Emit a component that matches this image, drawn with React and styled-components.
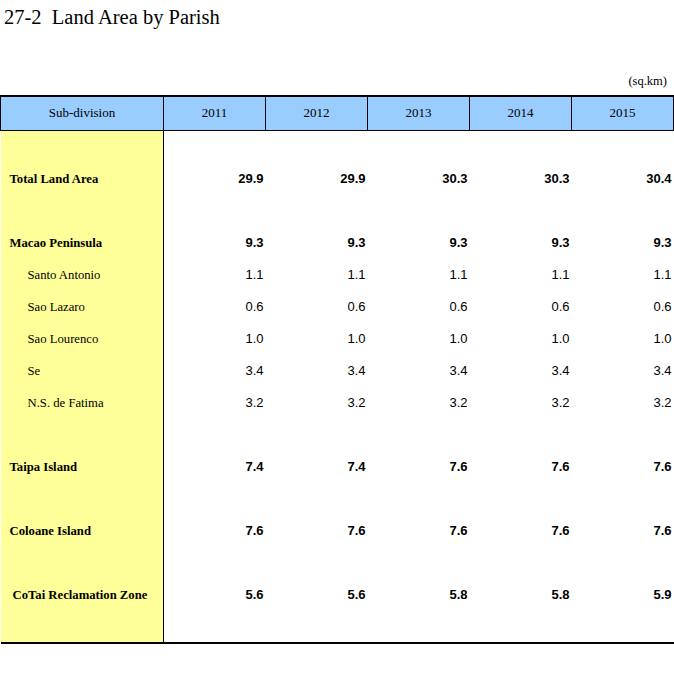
import React from "react";
import styled, { createGlobalStyle } from "styled-components";

const GlobalStyle = createGlobalStyle`
    html, body {
        margin: 0;
        padding: 0;
        background: #fff;
    }
`;

const Page = styled.div`
    width: 674px;
    font-family: "Liberation Serif", "Times New Roman", serif;
    color: #000;
`;

const Title = styled.h1`
    margin: 0;
    padding: 6px 0 0 4px;
    font-size: 20.5px;
    font-weight: 400;
    line-height: 23px;
`;

const Unit = styled.div`
    box-sizing: border-box;
    height: 66px;
    padding: 45px 7px 0 0;
    text-align: right;
    font-size: 12.5px;
    line-height: 14px;
`;

const Table = styled.table`
    width: 674px;
    border-collapse: collapse;
    table-layout: fixed;
    border-top: 2px solid #000;
    border-bottom: 2px solid #000;
`;

const HeadRow = styled.tr`
    height: 34px;
`;

const BodyRow = styled.tr`
    height: ${p => (p.last ? 33 : 32)}px;
`;

const HeadCell = styled.th`
    background: #99ccff;
    border: 1px solid #000;
    border-top: none;
    padding: 0;
    font-size: 13px;
    font-weight: 400;
    text-align: center;
    line-height: 14px;
`;

const Label = styled.td`
    background: #ffff99;
    border-right: 1px solid #000;
    padding: 1px 0 0 ${p => p.indent || 0}px;
    font-size: 12.7px;
    line-height: 14px;
    font-weight: ${p => (p.bold ? 700 : 400)};
    white-space: nowrap;
`;

const Value = styled.td`
    padding: 1px 2px 0 0;
    text-align: right;
    font-family: "Liberation Sans", Arial, sans-serif;
    font-size: 13px;
    line-height: 14px;
    font-weight: ${p => (p.bold ? 700 : 400)};
`;

const years = ["2011", "2012", "2013", "2014", "2015"];

const rows = [
    null,
    { label: "Total Land Area", bold: true, indent: 9, values: ["29.9", "29.9", "30.3", "30.3", "30.4"] },
    null,
    { label: "Macao Peninsula", bold: true, indent: 9, values: ["9.3", "9.3", "9.3", "9.3", "9.3"] },
    { label: "Santo Antonio", indent: 27, values: ["1.1", "1.1", "1.1", "1.1", "1.1"] },
    { label: "Sao Lazaro", indent: 27, values: ["0.6", "0.6", "0.6", "0.6", "0.6"] },
    { label: "Sao Lourenco", indent: 27, values: ["1.0", "1.0", "1.0", "1.0", "1.0"] },
    { label: "Se", indent: 27, values: ["3.4", "3.4", "3.4", "3.4", "3.4"] },
    { label: "N.S. de Fatima", indent: 27, values: ["3.2", "3.2", "3.2", "3.2", "3.2"] },
    null,
    { label: "Taipa Island", bold: true, indent: 9, values: ["7.4", "7.4", "7.6", "7.6", "7.6"] },
    null,
    { label: "Coloane Island", bold: true, indent: 9, values: ["7.6", "7.6", "7.6", "7.6", "7.6"] },
    null,
    { label: "CoTai Reclamation Zone", bold: true, indent: 12, values: ["5.6", "5.6", "5.8", "5.8", "5.9"] },
    null,
];

function App() {
    return <Page>
        <GlobalStyle />
        <Title>27-2&nbsp; Land Area by Parish</Title>
        <Unit>(sq.km)</Unit>
        <Table>
            <colgroup>
                <col style={{ width: 163 }} />
                {years.map(y => <col key={y} style={{ width: 102 }} />)}
            </colgroup>
            <thead>
                <HeadRow>
                    <HeadCell>Sub-division</HeadCell>
                    {years.map(y => <HeadCell key={y}>{y}</HeadCell>)}
                </HeadRow>
            </thead>
            <tbody>
                {rows.map((r, i) => r ? (
                    <BodyRow key={i}>
                        <Label bold={r.bold} indent={r.indent}>{r.label}</Label>
                        {r.values.map((v, j) => <Value key={j} bold={r.bold}>{v}</Value>)}
                    </BodyRow>
                ) : (
                    <BodyRow key={i} last={i === rows.length - 1}>
                        <Label />
                        {years.map(y => <Value key={y} />)}
                    </BodyRow>
                ))}
            </tbody>
        </Table>
    </Page>;
}

export default App;
